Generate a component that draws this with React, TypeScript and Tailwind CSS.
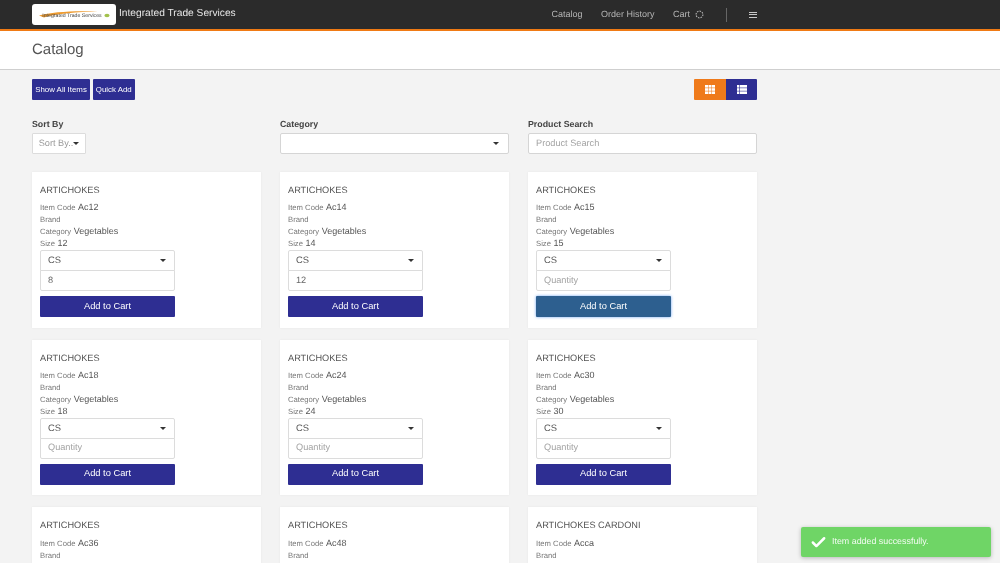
import { Check } from "lucide-react";

const font = "font-['Liberation_Sans',Arial,sans-serif]";

type Item = { name: string; code: string; size?: string; qty?: string; focus?: boolean };

const items: Item[] = [
  { name: "ARTICHOKES", code: "Ac12", size: "12", qty: "8" },
  { name: "ARTICHOKES", code: "Ac14", size: "14", qty: "12" },
  { name: "ARTICHOKES", code: "Ac15", size: "15", focus: true },
  { name: "ARTICHOKES", code: "Ac18", size: "18" },
  { name: "ARTICHOKES", code: "Ac24", size: "24" },
  { name: "ARTICHOKES", code: "Ac30", size: "30" },
  { name: "ARTICHOKES", code: "Ac36", size: "36" },
  { name: "ARTICHOKES", code: "Ac48", size: "48" },
  { name: "ARTICHOKES CARDONI", code: "Acca", size: "" },
];

function Caret({ className = "" }: { className?: string }) {
  return <span className={`inline-block h-0 w-0 border-x-[3px] border-t-[3px] border-x-transparent border-t-[#333] ${className}`} />;
}

function Meta({ label, value }: { label: string; value?: string }) {
  return (
    <div className="flex h-3 items-center gap-[2.5px] whitespace-nowrap">
      <span className="text-[7.7px] text-[#777]">{label}</span>
      {value ? <span className="text-[9px] text-[#555]">{value}</span> : null}
    </div>
  );
}

function Card({ item }: { item: Item }) {
  return (
    <div className="h-[155.7px] bg-white pl-2 pt-[13px] shadow-[0_0_2px_rgba(0,0,0,0.06)]">
      <div className="h-[11px] text-[9.2px] leading-[11px] text-[#555]">{item.name}</div>
      <div className="mt-[6px] flex w-[135px] flex-col">
        <Meta label="Item Code" value={item.code} />
        <Meta label="Brand" />
        <Meta label="Category" value="Vegetables" />
        <Meta label="Size" value={item.size} />
        <div className="flex h-[21px] items-center justify-between rounded-t-[2px] border border-[#dcdcdc] bg-white pl-[7px] pr-2 text-[9.4px] text-[#555]">
          <span>CS</span>
          <Caret />
        </div>
        <div className={`-mt-px flex h-[21px] items-center rounded-b-[2px] border border-[#dcdcdc] bg-white pl-[7px] text-[9.2px] ${item.qty ? "text-[#666]" : "text-[#a3a3a3]"}`}>
          {item.qty ?? "Quantity"}
        </div>
        <button
          className={`mt-[5px] h-[21px] rounded-[1px] text-center text-[9.3px] text-white ${
            item.focus ? "bg-[#2d5f8f] shadow-[0_0_3px_rgba(70,140,240,0.8)]" : "bg-[#2e2e92]"
          }`}
        >
          Add to Cart
        </button>
      </div>
    </div>
  );
}

function Logo() {
  return (
    <div className="relative flex h-[21px] w-[84px] shrink-0 flex-col items-center justify-center rounded-[3px] bg-white">
      <svg viewBox="0 0 84 21" className="absolute inset-0 h-full w-full">
        <path d="M7 11.5C20 8 40 6.5 66 7.5 45 8 25 9.5 12 13.5Z" fill="#ee9b2f" />
        <ellipse cx="75" cy="11.5" rx="2.6" ry="1.7" fill="#a3c24c" />
      </svg>
      <span className="relative mt-[3px] ml-[-4px] whitespace-nowrap text-[5.2px] leading-[6px] text-[#444]">Integrated Trade Services</span>
    </div>
  );
}

function GridIcon() {
  return (
    <svg viewBox="0 0 10 9" className="h-[9px] w-[10px]" fill="#fff">
      {[0, 3.2, 6.4].flatMap((y) => [0, 3.5, 7].map((x) => <rect key={`${x}-${y}`} x={x} y={y} width="3" height="2.6" />))}
    </svg>
  );
}

function ListIcon() {
  return (
    <svg viewBox="0 0 10 9" className="h-[9px] w-[10px]" fill="#fff">
      {[0, 3.2, 6.4].flatMap((y) => [
        <rect key={`a${y}`} x="0" y={y} width="2.4" height="2.6" />,
        <rect key={`b${y}`} x="3" y={y} width="7" height="2.6" />,
      ])}
    </svg>
  );
}

export default function App() {
  return (
    <div className={`${font} relative h-[563px] w-full overflow-hidden bg-[#f3f3f3] blur-[0.3px] [text-rendering:geometricPrecision]`}>
      <header className="h-[31px] border-b-2 border-[#f07a14] bg-[#2b2b2b]">
        <div className="ml-8 flex h-[29px] w-[725px] items-center">
          <Logo />
          <span className="mb-[2px] ml-[3px] text-[10.2px] text-[#e8e8e8]">Integrated Trade Services</span>
          <nav className="ml-auto flex items-center text-[9px] text-[#b5b5b5]">
            <span>Catalog</span>
            <span className="ml-[18.5px]">Order History</span>
            <span className="ml-[18.5px]">Cart</span>
            <svg viewBox="0 0 10 10" className="ml-[5px] h-[9px] w-[9px]" fill="none" stroke="#b5b5b5" strokeWidth="1.2" strokeDasharray="1.8 1.1">
              <circle cx="5" cy="5" r="3.8" />
            </svg>
            <span className="ml-[22px] h-[14px] w-px bg-[#666]" />
            <span className="ml-[22px] flex w-[8px] flex-col gap-[1.5px]">
              <i className="h-px bg-[#c8c8c8]" />
              <i className="h-px bg-[#c8c8c8]" />
              <i className="h-px bg-[#c8c8c8]" />
            </span>
          </nav>
        </div>
      </header>

      <div className="flex h-[39px] items-center border-b border-[#cfcfcf] bg-white pl-8">
        <h1 className="text-[15px] text-[#555]">Catalog</h1>
      </div>

      <main className="ml-8 w-[725px] pt-[9px]">
        <div className="flex h-[21px] items-center justify-between">
          <div className="flex gap-[2.5px] text-[7.9px] text-white">
            <button className="h-[21px] w-[58px] rounded-[1px] bg-[#2e2e92]">Show All Items</button>
            <button className="h-[21px] w-[42.5px] rounded-[1px] bg-[#2e2e92]">Quick Add</button>
          </div>
          <div className="flex h-[21px]">
            <div className="flex w-[32px] items-center justify-center rounded-l-[1px] bg-[#ef7a1a]"><GridIcon /></div>
            <div className="flex w-[31px] items-center justify-center rounded-r-[1px] bg-[#2e2e92]"><ListIcon /></div>
          </div>
        </div>

        <div className="mt-[19px] grid grid-cols-3 gap-x-[19px]">
          <div>
            <label className="block h-[14px] text-[8.8px] font-bold leading-[11px] text-[#444]">Sort By</label>
            <div className="flex h-[21px] w-[54px] items-center justify-center gap-px rounded-[1px] border border-[#dcdcdc] bg-white text-[9.2px] text-[#999]">
              <span>Sort By..</span>
              <Caret className="ml-[-1px]" />
            </div>
          </div>
          <div>
            <label className="block h-[14px] text-[8.8px] font-bold leading-[11px] text-[#444]">Category</label>
            <div className="flex h-[21px] items-center justify-end rounded-[2px] border border-[#d5d5d5] bg-white pr-[9px]">
              <Caret />
            </div>
          </div>
          <div>
            <label className="block h-[14px] text-[8.8px] font-bold leading-[11px] text-[#444]">Product Search</label>
            <div className="flex h-[21px] items-center rounded-[2px] border border-[#d5d5d5] bg-white pl-[7px] text-[9.2px] text-[#a3a3a3]">
              Product Search
            </div>
          </div>
        </div>

        <div className="mt-[18px] grid grid-cols-3 gap-x-[19px] gap-y-[12px]">
          {items.map((item) => (
            <Card key={item.code} item={item} />
          ))}
        </div>
      </main>

      <div className="absolute left-[801px] top-[527px] flex h-[30px] w-[190px] items-center rounded-[2px] bg-[#6fd566] pl-[9px] shadow-[0_1px_4px_rgba(0,0,0,0.25)]">
        <Check className="h-[17px] w-[17px] text-white" strokeWidth={3.5} />
        <span className="ml-[5px] text-[8.9px] text-[#f2fbf1]">Item added successfully.</span>
      </div>
    </div>
  );
}
